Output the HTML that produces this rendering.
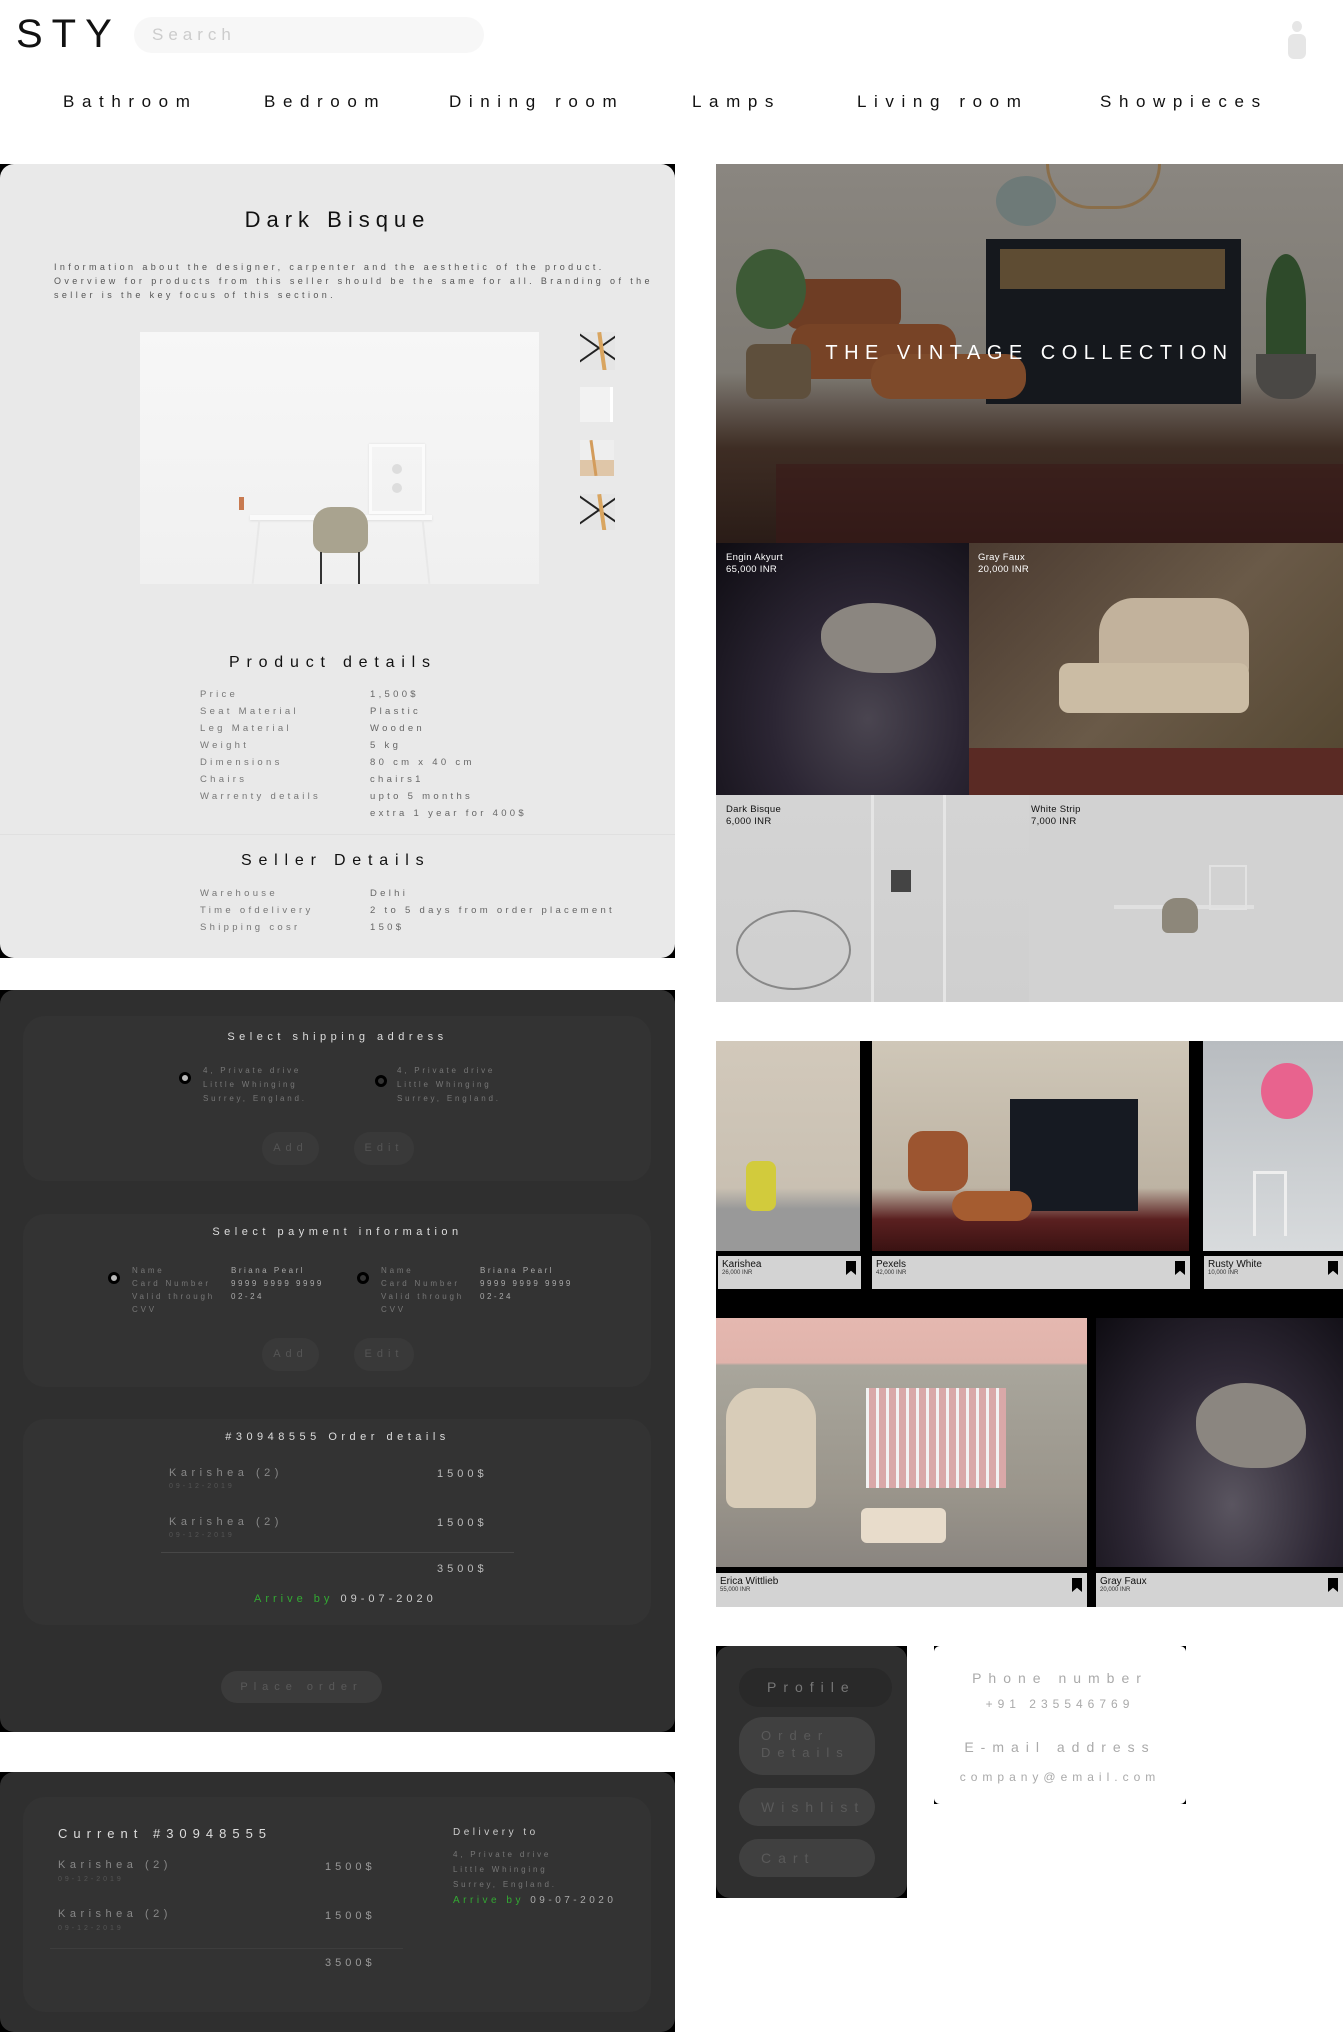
<!DOCTYPE html>
<html><head><meta charset="utf-8">
<style>
*{margin:0;padding:0;box-sizing:border-box}
body{width:1343px;height:2026px;background:#fff;position:relative;overflow:hidden;font-family:"Liberation Sans",sans-serif}
.a{position:absolute}
.t{position:absolute;white-space:nowrap}
.nav{top:92px;font-size:17px;letter-spacing:7.6px;color:#111}
.lbl{font-size:9.5px;letter-spacing:3.3px;color:#777}
.val{font-size:9.5px;letter-spacing:3.3px;color:#666}
.dk{background:#2f2f2f}
.in{background:#333;border-radius:22px}
.h{font-size:11px;letter-spacing:4.5px;color:#ddd}
.s{font-size:8px;letter-spacing:2.8px;color:#777}
.sv{font-size:8px;letter-spacing:2.5px;color:#aaa}
.btn{position:absolute;background:#393939;border-radius:16px;color:#555;font-size:11px;letter-spacing:5px;text-align:center}
.radio{position:absolute;width:12px;height:12px;border-radius:50%;border:3px solid #000;background:#bbb}
.radio.o{background:#333}
.cap{position:absolute;background:#d3d3d3;font-size:10px;color:#111;padding:3px 4px;line-height:1.1}
.cap small{display:block;font-size:6px;color:#333}
.bm{position:absolute;right:5px;top:5px;width:10px;height:14px;background:#000;clip-path:polygon(0 0,100% 0,100% 100%,50% 70%,0 100%)}
.gl{font-size:9.5px;color:#fff;line-height:1.3;letter-spacing:.3px}
</style></head><body>

<!-- header -->
<div class="t" style="left:16px;top:12px;font-size:40px;letter-spacing:9px;color:#111">STY</div>
<div class="a" style="left:134px;top:17px;width:350px;height:36px;background:#f7f7f7;border-radius:18px"></div>
<div class="t" style="left:152px;top:25px;font-size:17px;letter-spacing:5px;color:#ccc">Search</div>
<div class="a" style="left:1292px;top:21px;width:10px;height:11px;border-radius:50%;background:#e6e6e6"></div>
<div class="a" style="left:1288px;top:34px;width:18px;height:25px;border-radius:6px;background:#e6e6e6"></div>

<div class="t nav" style="left:63px">Bathroom</div>
<div class="t nav" style="left:264px">Bedroom</div>
<div class="t nav" style="left:449px">Dining room</div>
<div class="t nav" style="left:692px">Lamps</div>
<div class="t nav" style="left:857px">Living room</div>
<div class="t nav" style="left:1100px">Showpieces</div>

<!-- product card -->
<div class="a" style="left:0;top:164px;width:675px;height:794px;background:#000"></div>
<div class="a" style="left:0;top:164px;width:675px;height:794px;background:#e9e9e9;border-radius:14px"></div>
<div class="t" style="left:0;width:675px;text-align:center;top:207px;font-size:22px;letter-spacing:6px;color:#111">Dark Bisque</div>
<div class="a" style="left:54px;top:260px;width:605px;font-size:9px;letter-spacing:3.4px;color:#555;line-height:14px">Information about the designer, carpenter and the aesthetic of the product. Overview for products from this seller should be the same for all. Branding of the seller is the key focus of this section.</div>
<div class="a" style="left:140px;top:332px;width:399px;height:252px;background:linear-gradient(#f7f7f7,#f0f0f0)">
  <div class="a" style="left:110px;top:183px;width:182px;height:5px;background:#fafafa;box-shadow:0 1px 2px #ddd"></div>
  <div class="a" style="left:115px;top:188px;width:2px;height:64px;background:#e8e8e8;transform:rotate(6deg)"></div>
  <div class="a" style="left:285px;top:188px;width:2px;height:64px;background:#e8e8e8;transform:rotate(-6deg)"></div>
  <div class="a" style="left:229px;top:112px;width:56px;height:70px;border:3px solid #fbfbfb;box-shadow:0 0 2px #ddd"></div>
  <div class="a" style="left:252px;top:132px;width:10px;height:10px;border-radius:50%;background:#ddd"></div>
  <div class="a" style="left:252px;top:151px;width:10px;height:10px;border-radius:50%;background:#ddd"></div>
  <div class="a" style="left:99px;top:165px;width:5px;height:13px;background:#c87a50"></div>
  <div class="a" style="left:173px;top:175px;width:55px;height:46px;background:#a9a38f;border-radius:18px 18px 12px 12px"></div>
  <div class="a" style="left:180px;top:220px;width:2px;height:32px;background:#333"></div>
  <div class="a" style="left:218px;top:220px;width:2px;height:32px;background:#333"></div>
</div>
<div class="a" style="left:580px;top:332px;width:35px;height:38px;background:#e5e5e5;overflow:hidden"><div class="a" style="left:-6px;top:15px;width:50px;height:2px;background:#222;transform:rotate(35deg)"></div><div class="a" style="left:-6px;top:15px;width:50px;height:2px;background:#222;transform:rotate(-35deg)"></div><div class="a" style="left:20px;top:0;width:4px;height:40px;background:#d9a560;transform:rotate(-8deg)"></div></div>
<div class="a" style="left:580px;top:387px;width:33px;height:35px;background:#f2f2f2;border-right:3px solid #fff"></div>
<div class="a" style="left:580px;top:440px;width:34px;height:36px;background:linear-gradient(#eee 55%,#dfc6a8 55%)"><div class="a" style="left:12px;top:0;width:3px;height:36px;background:#d39c5c;transform:rotate(-8deg)"></div></div>
<div class="a" style="left:580px;top:494px;width:35px;height:36px;background:#e5e5e5;overflow:hidden"><div class="a" style="left:-6px;top:15px;width:50px;height:2px;background:#222;transform:rotate(35deg)"></div><div class="a" style="left:-6px;top:15px;width:50px;height:2px;background:#222;transform:rotate(-35deg)"></div><div class="a" style="left:20px;top:0;width:4px;height:40px;background:#d9a560;transform:rotate(-8deg)"></div></div>

<div class="t" style="left:229px;top:654px;font-size:16px;letter-spacing:6.8px;color:#111">Product details</div>
<div class="t lbl" style="left:200px;top:686px;line-height:17px">Price<br>Seat Material<br>Leg Material<br>Weight<br>Dimensions<br>Chairs<br>Warrenty details</div>
<div class="t val" style="left:370px;top:686px;line-height:17px">1,500$<br>Plastic<br>Wooden<br>5 kg<br>80 cm x 40 cm<br>chairs1<br>upto 5 months<br>extra 1 year for 400$</div>
<div class="a" style="left:0;top:834px;width:675px;height:1px;background:#e0e0e0"></div>
<div class="t" style="left:241px;top:852px;font-size:16px;letter-spacing:6.8px;color:#111">Seller Details</div>
<div class="t lbl" style="left:200px;top:885px;line-height:17px">Warehouse<br>Time ofdelivery<br>Shipping cosr</div>
<div class="t val" style="left:370px;top:885px;line-height:17px">Delhi<br>2 to 5 days from order placement<br>150$</div>

<!-- checkout card -->
<div class="a" style="left:0;top:990px;width:675px;height:742px;background:#000"></div>
<div class="a dk" style="left:0;top:990px;width:675px;height:742px;border-radius:14px"></div>
<div class="a in" style="left:23px;top:1016px;width:628px;height:165px"></div>
<div class="t h" style="left:0;width:675px;text-align:center;top:1031px">Select shipping address</div>
<div class="radio" style="left:179px;top:1072px"></div>
<div class="t s" style="left:203px;top:1064px;line-height:14px">4, Private drive<br>Little Whinging<br>Surrey, England.</div>
<div class="radio o" style="left:375px;top:1075px"></div>
<div class="t s" style="left:397px;top:1064px;line-height:14px">4, Private drive<br>Little Whinging<br>Surrey, England.</div>
<div class="btn" style="left:262px;top:1132px;width:57px;height:33px;line-height:33px">Add</div>
<div class="btn" style="left:354px;top:1132px;width:60px;height:33px;line-height:33px">Edit</div>

<div class="a in" style="left:23px;top:1214px;width:628px;height:173px"></div>
<div class="t h" style="left:0;width:675px;text-align:center;top:1226px">Select payment information</div>
<div class="radio" style="left:108px;top:1272px"></div>
<div class="t s" style="left:132px;top:1264px;line-height:13px">Name<br>Card Number<br>Valid through<br>CVV</div>
<div class="t sv" style="left:231px;top:1264px;line-height:13px">Briana Pearl<br>9999 9999 9999<br>02-24</div>
<div class="radio o" style="left:357px;top:1272px"></div>
<div class="t s" style="left:381px;top:1264px;line-height:13px">Name<br>Card Number<br>Valid through<br>CVV</div>
<div class="t sv" style="left:480px;top:1264px;line-height:13px">Briana Pearl<br>9999 9999 9999<br>02-24</div>
<div class="btn" style="left:262px;top:1338px;width:57px;height:33px;line-height:33px">Add</div>
<div class="btn" style="left:354px;top:1338px;width:60px;height:33px;line-height:33px">Edit</div>

<div class="a in" style="left:23px;top:1419px;width:628px;height:206px"></div>
<div class="t h" style="left:0;width:675px;text-align:center;top:1431px">#30948555 Order details</div>
<div class="t" style="left:169px;top:1467px;font-size:11px;letter-spacing:4.5px;color:#888">Karishea (2)</div>
<div class="t" style="left:169px;top:1483px;font-size:7px;letter-spacing:3px;color:#555">09-12-2019</div>
<div class="t" style="left:437px;top:1468px;font-size:11px;letter-spacing:4px;color:#bbb">1500$</div>
<div class="t" style="left:169px;top:1516px;font-size:11px;letter-spacing:4.5px;color:#888">Karishea (2)</div>
<div class="t" style="left:169px;top:1532px;font-size:7px;letter-spacing:3px;color:#555">09-12-2019</div>
<div class="t" style="left:437px;top:1517px;font-size:11px;letter-spacing:4px;color:#bbb">1500$</div>
<div class="a" style="left:161px;top:1552px;width:353px;height:1px;background:#474747"></div>
<div class="t" style="left:437px;top:1563px;font-size:11px;letter-spacing:4px;color:#bbb">3500$</div>
<div class="t" style="left:254px;top:1593px;font-size:11px;letter-spacing:4px;color:#3a3"><span>Arrive by</span> <span style="color:#ccc">09-07-2020</span></div>
<div class="btn" style="left:221px;top:1671px;width:161px;height:32px;line-height:32px;color:#5a5a5a;letter-spacing:6px;background:#3b3b3b">Place order</div>

<!-- current order -->
<div class="a" style="left:0;top:1772px;width:675px;height:260px;background:#000"></div>
<div class="a dk" style="left:0;top:1772px;width:675px;height:260px;border-radius:14px"></div>
<div class="a in" style="left:23px;top:1797px;width:628px;height:215px"></div>
<div class="t" style="left:58px;top:1826px;font-size:13px;letter-spacing:6px;color:#ddd">Current #30948555</div>
<div class="t" style="left:58px;top:1859px;font-size:11px;letter-spacing:4.5px;color:#888">Karishea (2)</div>
<div class="t" style="left:58px;top:1876px;font-size:7px;letter-spacing:3px;color:#555">09-12-2019</div>
<div class="t" style="left:325px;top:1861px;font-size:11px;letter-spacing:4px;color:#999">1500$</div>
<div class="t" style="left:58px;top:1908px;font-size:11px;letter-spacing:4.5px;color:#888">Karishea (2)</div>
<div class="t" style="left:58px;top:1925px;font-size:7px;letter-spacing:3px;color:#555">09-12-2019</div>
<div class="t" style="left:325px;top:1910px;font-size:11px;letter-spacing:4px;color:#999">1500$</div>
<div class="a" style="left:50px;top:1948px;width:353px;height:1px;background:#3d3d3d"></div>
<div class="t" style="left:325px;top:1957px;font-size:11px;letter-spacing:4px;color:#999">3500$</div>
<div class="t" style="left:453px;top:1827px;font-size:10px;letter-spacing:3.5px;color:#ccc">Delivery to</div>
<div class="t s" style="left:453px;top:1847px;line-height:15px">4, Private drive<br>Little Whinging<br>Surrey, England.</div>
<div class="t" style="left:453px;top:1895px;font-size:10px;letter-spacing:3.5px;color:#3a3">Arrive by <span style="color:#aaa">09-07-2020</span></div>

<!-- hero -->
<div class="a" style="left:716px;top:164px;width:627px;height:379px;background:linear-gradient(#8a8680 0%,#7e7a73 55%,#3e2d24 75%,#2a1c17 100%);overflow:hidden">
  <div class="a" style="left:270px;top:75px;width:255px;height:165px;background:#15181d"></div>
  <div class="a" style="left:284px;top:85px;width:225px;height:40px;background:#5e4c33"></div>
  <div class="a" style="left:330px;top:0;width:115px;height:45px;border:3px solid #8a6e4a;border-top:none;border-radius:0 0 60px 60px"></div>
  <div class="a" style="left:280px;top:12px;width:60px;height:50px;border-radius:50%;background:#6e7a78"></div>
  <div class="a" style="left:70px;top:115px;width:115px;height:50px;background:#6e3d24;border-radius:12px"></div>
  <div class="a" style="left:75px;top:160px;width:165px;height:55px;background:#774326;border-radius:18px"></div>
  <div class="a" style="left:155px;top:190px;width:155px;height:45px;background:#7e4a2a;border-radius:20px"></div>
  <div class="a" style="left:30px;top:180px;width:65px;height:55px;background:#5e4f3c;border-radius:10px"></div>
  <div class="a" style="left:540px;top:190px;width:60px;height:45px;background:#4a4845;border-radius:0 0 25px 25px"></div>
  <div class="a" style="left:550px;top:90px;width:40px;height:100px;background:#2e4a2a;border-radius:50% 50% 0 0"></div>
  <div class="a" style="left:20px;top:85px;width:70px;height:80px;background:#3d5a36;border-radius:50%"></div>
  <div class="a" style="left:60px;top:300px;width:567px;height:79px;background:#3a1818;opacity:.55"></div>
</div>
<div class="t" style="left:716px;width:627px;text-align:center;top:342px;font-size:20px;letter-spacing:6.5px;color:#fff">THE VINTAGE COLLECTION</div>

<div class="a" style="left:716px;top:543px;width:253px;height:252px;background:radial-gradient(ellipse at 60% 70%,#4a4550 0%,#2b2533 45%,#0e0c12 100%)">
  <div class="a" style="left:105px;top:60px;width:115px;height:70px;background:#8b8680;border-radius:45% 55% 40% 50%"></div>
</div>
<div class="t gl" style="left:726px;top:552px">Engin Akyurt<br>65,000 INR</div>
<div class="a" style="left:969px;top:543px;width:374px;height:252px;background:linear-gradient(135deg,#4a3a30,#6a5a48 50%,#52452f)">
  <div class="a" style="left:130px;top:55px;width:150px;height:80px;background:#c2b29c;border-radius:35px 35px 10px 10px"></div>
  <div class="a" style="left:90px;top:120px;width:190px;height:50px;background:#cbbca4;border-radius:10px"></div>
  <div class="a" style="left:0;top:205px;width:374px;height:47px;background:#5a2a24"></div>
</div>
<div class="t gl" style="left:978px;top:552px">Gray Faux<br>20,000 INR</div>
<div class="a" style="left:716px;top:795px;width:313px;height:207px;background:linear-gradient(#d4d4d4,#cfcfcf)">
  <div class="a" style="left:155px;top:0;width:75px;height:207px;border-left:3px solid #e5e5e5;border-right:3px solid #e5e5e5"></div>
  <div class="a" style="left:175px;top:75px;width:20px;height:22px;background:#444"></div>
  <div class="a" style="left:20px;top:115px;width:115px;height:80px;border:2px solid #888;border-radius:50%"></div>
</div>
<div class="t gl" style="left:726px;top:804px;color:#111">Dark Bisque<br>6,000 INR</div>
<div class="a" style="left:1029px;top:795px;width:314px;height:207px;background:#d2d2d2">
  <div class="a" style="left:85px;top:110px;width:140px;height:4px;background:#e0e0e0"></div>
  <div class="a" style="left:133px;top:103px;width:36px;height:35px;background:#8d877a;border-radius:14px 14px 6px 6px"></div>
  <div class="a" style="left:180px;top:70px;width:38px;height:45px;border:2px solid #e2e2e2"></div>
</div>
<div class="t gl" style="left:1031px;top:804px;color:#111">White Strip<br>7,000 INR</div>

<!-- gallery -->
<div class="a" style="left:716px;top:1041px;width:627px;height:566px;background:#000"></div>
<div class="a" style="left:716px;top:1041px;width:144px;height:210px;background:linear-gradient(#d2c9bb,#c9c0b2 70%,#999 80%)">
  <div class="a" style="left:30px;top:120px;width:30px;height:50px;background:#d2cb3c;border-radius:8px"></div>
</div>
<div class="cap" style="left:718px;top:1256px;width:143px;height:33px">Karishea<small>26,000 INR</small><i class="bm"></i></div>
<div class="a" style="left:872px;top:1041px;width:317px;height:210px;background:linear-gradient(#cfc7b8,#bdb3a3 70%,#5a2020 85%,#3a1212)">
  <div class="a" style="left:138px;top:58px;width:128px;height:112px;background:#161a22"></div>
  <div class="a" style="left:36px;top:90px;width:60px;height:60px;background:#9c5530;border-radius:15px"></div>
  <div class="a" style="left:80px;top:150px;width:80px;height:30px;background:#a55c30;border-radius:15px"></div>
</div>
<div class="cap" style="left:872px;top:1256px;width:318px;height:33px">Pexels<small>42,000 INR</small><i class="bm"></i></div>
<div class="a" style="left:1203px;top:1041px;width:140px;height:210px;background:linear-gradient(#b8bcc0,#d8dbdd)">
  <div class="a" style="left:58px;top:22px;width:52px;height:56px;border-radius:50%;background:#e8638e"></div>
  <div class="a" style="left:50px;top:130px;width:34px;height:65px;border:3px solid #eee;border-bottom:none"></div>
</div>
<div class="cap" style="left:1204px;top:1256px;width:139px;height:33px">Rusty White<small>10,000 INR</small><i class="bm"></i></div>
<div class="a" style="left:716px;top:1318px;width:371px;height:249px;background:linear-gradient(#e5b8b0 0%,#e0b3ab 18%,#a9a69c 19%,#9a958b 70%,#8a8580)">
  <div class="a" style="left:10px;top:70px;width:90px;height:120px;background:#d8ccb8;border-radius:30px 30px 10px 10px"></div>
  <div class="a" style="left:150px;top:70px;width:140px;height:100px;background:repeating-linear-gradient(90deg,#f2f2f2 0 3px,#d9a8a8 3px 10px)"></div>
  <div class="a" style="left:145px;top:190px;width:85px;height:35px;background:#e8dccb;border-radius:6px"></div>
</div>
<div class="cap" style="left:716px;top:1573px;width:371px;height:34px">Erica Wittlieb<small>55,000 INR</small><i class="bm"></i></div>
<div class="a" style="left:1096px;top:1318px;width:247px;height:249px;background:radial-gradient(ellipse at 55% 75%,#5a5560 0%,#2e2835 50%,#0e0c12 100%)">
  <div class="a" style="left:100px;top:65px;width:110px;height:85px;background:#8b8680;border-radius:45% 55% 40% 50%"></div>
</div>
<div class="cap" style="left:1096px;top:1573px;width:247px;height:34px">Gray Faux<small>20,000 INR</small><i class="bm"></i></div>

<!-- profile menu -->
<div class="a" style="left:716px;top:1646px;width:191px;height:252px;background:#000"></div>
<div class="a dk" style="left:716px;top:1646px;width:191px;height:252px;border-radius:14px"></div>
<div class="a" style="left:739px;top:1668px;width:153px;height:39px;background:#292929;border-radius:20px"></div>
<div class="t" style="left:767px;top:1679px;font-size:14px;letter-spacing:7px;color:#777">Profile</div>
<div class="a" style="left:739px;top:1717px;width:136px;height:58px;background:#404040;border-radius:24px"></div>
<div class="t" style="left:761px;top:1727px;font-size:13px;letter-spacing:7px;color:#5a5a5a;line-height:17px">Order<br>Details</div>
<div class="a" style="left:739px;top:1788px;width:136px;height:38px;background:#404040;border-radius:19px"></div>
<div class="t" style="left:761px;top:1799px;font-size:14px;letter-spacing:7px;color:#5a5a5a">Wishlist</div>
<div class="a" style="left:739px;top:1839px;width:136px;height:38px;background:#404040;border-radius:19px"></div>
<div class="t" style="left:761px;top:1850px;font-size:14px;letter-spacing:7px;color:#5a5a5a">Cart</div>

<!-- contact -->
<div class="a" style="left:934px;top:1646px;width:252px;height:158px;background:#000"></div>
<div class="a" style="left:934px;top:1646px;width:252px;height:158px;background:#fff;border-radius:6px"></div>
<div class="t" style="left:934px;width:252px;text-align:center;top:1670px;font-size:14px;letter-spacing:7px;color:#aaa">Phone number</div>
<div class="t" style="left:934px;width:252px;text-align:center;top:1697px;font-size:12px;letter-spacing:5px;color:#aaa">+91 235546769</div>
<div class="t" style="left:934px;width:252px;text-align:center;top:1739px;font-size:14px;letter-spacing:7px;color:#aaa">E-mail address</div>
<div class="t" style="left:934px;width:252px;text-align:center;top:1770px;font-size:12px;letter-spacing:5px;color:#aaa">company@email.com</div>

</body></html>
